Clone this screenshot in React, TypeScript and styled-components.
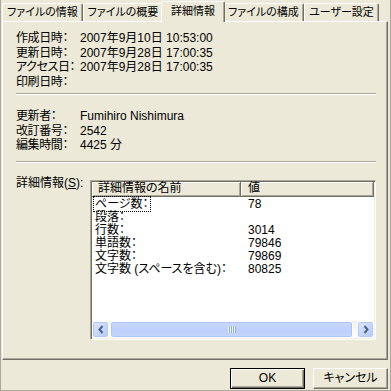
import React from "react";
import styled, { createGlobalStyle, css } from "styled-components";

const face = "#ece9d8";
const shadow = "#aca899";
const darkShadow = "#716f64";

const GlobalStyle = createGlobalStyle`
  html, body {
    margin: 0;
    padding: 0;
    background: ${face};
  }
  body {
    font-family: "Liberation Sans", "Noto Sans CJK JP", sans-serif;
    font-size: 12px;
    color: #000;
  }
`;

const Dialog = styled.div`
  box-sizing: border-box;
  width: 391px;
  height: 391px;
  padding: 1px 2px 0 1px;
  border: 1px solid #aca899;
  border-top: 0;
  background: ${face};
  font-feature-settings: "palt";
`;

const TabStrip = styled.div`
  display: flex;
  align-items: flex-end;
  height: 20px;
  position: relative;
  z-index: 1;
`;

const Tab = styled.div<{ $w: number; $active?: boolean }>`
  box-sizing: border-box;
  width: ${(p) => p.$w}px;
  height: 18px;
  padding-bottom: 1px;
  border-top: 1px solid #fff;
  border-left: 1px solid #fff;
  border-right: 1px solid ${darkShadow};
  border-radius: 2px 2px 0 0;
  box-shadow: inset -1px 0 ${shadow};
  display: flex;
  align-items: center;
  justify-content: center;
  font-size: 11px;
  line-height: 14px;
  white-space: nowrap;
  background: ${face};
  ${(p) =>
    p.$active &&
    css`
      width: ${p.$w + 4}px;
      height: 21px;
      margin: 0 -2px -1px;
      padding-bottom: 3px;
      position: relative;
      z-index: 2;
    `}
`;

const Panel = styled.div`
  box-sizing: border-box;
  width: 386px;
  height: 339px;
  border-top: 1px solid #fff;
  border-left: 1px solid #fff;
  border-right: 1px solid ${darkShadow};
  border-bottom: 1px solid ${darkShadow};
  box-shadow: inset -1px -1px ${shadow};
  padding: 9px 11px 0 13px;
`;

const InfoGrid = styled.div`
  display: grid;
  grid-template-columns: 64px 1fr;
  grid-auto-rows: 14.5px;
  line-height: 14.5px;
  white-space: nowrap;
`;

const InfoLabel = styled.span`
  letter-spacing: -0.4px;
`;

const Separator = styled.div<{ $before: number; $after: number }>`
  height: 0;
  border-top: 1px solid ${shadow};
  border-bottom: 1px solid #fff;
  margin: ${(p) => p.$before}px 0 ${(p) => p.$after}px;
`;

const DetailSection = styled.div`
  display: flex;
  align-items: flex-start;
`;

const DetailLabel = styled.div`
  width: 74px;
  line-height: 14px;
  white-space: nowrap;
`;

const ListView = styled.div`
  box-sizing: border-box;
  width: 286px;
  height: 160px;
  margin-top: 4px;
  border: 1px solid;
  border-color: ${shadow} #fff #fff ${shadow};
  box-shadow: inset 1px 1px ${darkShadow}, inset -1px -1px #f1efe2;
  padding: 1px;
  background: #fff;
  display: flex;
  flex-direction: column;
`;

const HeaderRow = styled.div`
  display: flex;
  height: 15px;
  flex: none;
`;

const HeaderCell = styled.div<{ $w?: number; $pad: number }>`
  box-sizing: border-box;
  ${(p) => (p.$w ? `width: ${p.$w}px;` : "flex: 1;")}
  padding-left: ${(p) => p.$pad}px;
  background: ${face};
  border-right: 1px solid ${darkShadow};
  border-bottom: 1px solid ${darkShadow};
  box-shadow: inset 1px 1px #fff, inset -1px -1px ${shadow};
  line-height: 13px;
  white-space: nowrap;
`;

const Rows = styled.div`
  flex: 1;
  padding-top: 1px;
`;

const Row = styled.div`
  display: flex;
  height: 13px;
  line-height: 13px;
  white-space: nowrap;
`;

const NameCell = styled.div`
  box-sizing: border-box;
  width: 149px;
  padding-left: 3px;
`;

const FocusText = styled.span`
  border: 1px dotted #000;
  margin-left: -2px;
  padding: 0 1px;
`;

const ValueCell = styled.div`
  padding-left: 7px;
`;

const ScrollBar = styled.div`
  display: flex;
  height: 17px;
  flex: none;
  background: linear-gradient(#f3f1ec, #fefefe);
`;

const ScrollButton = styled.div`
  box-sizing: border-box;
  width: 17px;
  height: 17px;
  border: 1px solid #fff;
  border-radius: 3px;
  background: linear-gradient(135deg, #dce7fe, #c4d5fc 60%, #b5c9f7);
  box-shadow: inset 0 0 0 1px #b4c8f6;
  display: flex;
  align-items: center;
  justify-content: center;
`;

const Thumb = styled.div`
  box-sizing: border-box;
  flex: 1;
  margin: 0 4px 0 1px;
  border: 1px solid #fff;
  border-radius: 3px;
  background: linear-gradient(#cbdafd, #bcd0fb 50%, #c3d5fc);
  box-shadow: inset 0 0 0 1px #adc3f5;
  display: flex;
  align-items: center;
  justify-content: center;
`;

const Grip = styled.div`
  width: 8px;
  height: 7px;
  background: repeating-linear-gradient(
    90deg,
    #eef4fe 0 1px,
    #8cb0f8 1px 2px
  );
`;

const ButtonBar = styled.div`
  display: flex;
  justify-content: flex-end;
  gap: 8px;
  margin-top: 8px;
`;

const Button = styled.button<{ $default?: boolean }>`
  box-sizing: border-box;
  width: 75px;
  height: 21px;
  padding: 0;
  font: inherit;
  color: #000;
  background: ${face};
  border: 1px solid;
  border-color: #fff ${darkShadow} ${darkShadow} #fff;
  box-shadow: inset -1px -1px ${shadow};
  line-height: 17px;
  ${(p) =>
    p.$default &&
    css`
      border-color: #000;
      box-shadow: inset 1px 1px #fff, inset -1px -1px ${darkShadow},
        inset -2px -2px ${shadow};
    `}
`;

const Arrow = ({ dir }: { dir: "left" | "right" }) => (
  <svg width="6" height="9" viewBox="0 0 6 9">
    <path
      d={dir === "left" ? "M4.5 1 L1.5 4.5 L4.5 8" : "M1.5 1 L4.5 4.5 L1.5 8"}
      fill="none"
      stroke="#4d6185"
      strokeWidth="2"
    />
  </svg>
);

const tabs = [
  { label: "ファイルの情報", w: 81 },
  { label: "ファイルの概要", w: 80 },
  { label: "詳細情報", w: 60, active: true },
  { label: "ファイルの構成", w: 81 },
  { label: "ユーザー設定", w: 75 },
];

const dates = [
  ["作成日時：", "2007年9月10日 10:53:00"],
  ["更新日時：", "2007年9月28日 17:00:35"],
  ["アクセス日：", "2007年9月28日 17:00:35"],
  ["印刷日時：", ""],
];

const edits = [
  ["更新者：", "Fumihiro Nishimura"],
  ["改訂番号：", "2542"],
  ["編集時間：", "4425 分"],
];

const details = [
  ["ページ数：", "78"],
  ["段落：", ""],
  ["行数：", "3014"],
  ["単語数：", "79846"],
  ["文字数：", "79869"],
  ["文字数 (スペースを含む)：", "80825"],
];

export default function App() {
  return (
    <>
      <GlobalStyle />
      <Dialog>
        <TabStrip>
          {tabs.map((t) => (
            <Tab key={t.label} $w={t.w} $active={t.active}>
              {t.label}
            </Tab>
          ))}
        </TabStrip>
        <Panel>
          <InfoGrid>
            {dates.map(([k, v]) => (
              <React.Fragment key={k}>
                <InfoLabel>{k}</InfoLabel>
                <span>{v}</span>
              </React.Fragment>
            ))}
          </InfoGrid>
          <Separator $before={4} $after={14} />
          <InfoGrid>
            {edits.map(([k, v]) => (
              <React.Fragment key={k}>
                <InfoLabel>{k}</InfoLabel>
                <span>{v}</span>
              </React.Fragment>
            ))}
          </InfoGrid>
          <Separator $before={8.5} $after={13} />
          <DetailSection>
            <DetailLabel>
              詳細情報(<u>S</u>):
            </DetailLabel>
            <ListView>
              <HeaderRow>
                <HeaderCell $w={149} $pad={6}>
                  詳細情報の名前
                </HeaderCell>
                <HeaderCell $pad={7}>値</HeaderCell>
              </HeaderRow>
              <Rows>
                {details.map(([k, v], i) => (
                  <Row key={k}>
                    <NameCell>{i === 0 ? <FocusText>{k}</FocusText> : k}</NameCell>
                    <ValueCell>{v}</ValueCell>
                  </Row>
                ))}
              </Rows>
              <ScrollBar>
                <ScrollButton>
                  <Arrow dir="left" />
                </ScrollButton>
                <Thumb>
                  <Grip />
                </Thumb>
                <ScrollButton>
                  <Arrow dir="right" />
                </ScrollButton>
              </ScrollBar>
            </ListView>
          </DetailSection>
        </Panel>
        <ButtonBar>
          <Button $default>OK</Button>
          <Button>キャンセル</Button>
        </ButtonBar>
      </Dialog>
    </>
  );
}
